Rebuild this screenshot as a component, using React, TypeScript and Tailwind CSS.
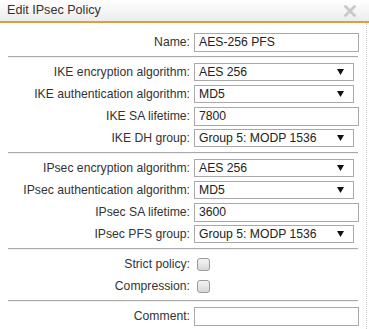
import React from "react";

const Separator: React.FC = () => (
  <div className="h-[8px] flex items-center pl-[8px] pr-[8px]">
    <div className="w-full border-t border-[#a9a9a9] border-b border-b-[#f3f3f3]" />
  </div>
);

const Label: React.FC<{ text: string }> = ({ text }) => (
  <div className="w-[194px] shrink-0 text-right pr-[4px] text-[12.2px] text-[#333]">{text}</div>
);

const TextRow: React.FC<{ label: string; value: string }> = ({ label, value }) => (
  <div className="h-[22px] flex items-center">
    <Label text={label} />
    <div className="w-[165px] h-[19px] border border-[#a9a9a9] bg-white px-[4px] flex items-center text-[12.2px] text-[#222]">
      {value}
    </div>
  </div>
);

const SelectRow: React.FC<{ label: string; value: string }> = ({ label, value }) => (
  <div className="h-[22px] flex items-center">
    <Label text={label} />
    <div className="w-[160px] h-[18px] border border-[#a9a9a9] bg-white pl-[4px] pr-[9px] flex items-center justify-between text-[12.2px] text-[#222]">
      <span>{value}</span>
      <svg width="7" height="6" viewBox="0 0 7 6">
        <path d="M0 0 L7 0 L3.5 6 Z" fill="#111" />
      </svg>
    </div>
  </div>
);

const CheckRow: React.FC<{ label: string }> = ({ label }) => (
  <div className="h-[22px] flex items-center">
    <Label text={label} />
    <div className="ml-[3px] w-[13px] h-[13px] rounded-[3px] border border-[#9a9a9a] bg-gradient-to-b from-[#f4f4f4] to-[#d8d8d8]" />
  </div>
);

const App: React.FC = () => {
  return (
    <div className="w-[369px] h-[329px] bg-white font-['Liberation_Sans',Arial,sans-serif] overflow-hidden">
      <div className="h-[21px] bg-gradient-to-b from-white to-[#ececec] flex items-center justify-between pl-[7px] pr-[13px]">
        <span className="text-[12.6px] text-[#333]">Edit IPsec Policy</span>
        <svg width="12" height="12" viewBox="0 0 12 12">
          <path d="M1.5 1.5 L10.5 10.5 M10.5 1.5 L1.5 10.5" stroke="#c9c9c9" strokeWidth="2.8" strokeLinecap="round" />
        </svg>
      </div>
      <div className="h-[2px] bg-[#e39c3a]" />
      <div className="w-[367px] h-[306px] border-r border-dotted border-[#cfcfcf] pt-[8px]">
        <TextRow label="Name:" value="AES-256 PFS" />
        <Separator />
        <SelectRow label="IKE encryption algorithm:" value="AES 256" />
        <SelectRow label="IKE authentication algorithm:" value="MD5" />
        <TextRow label="IKE SA lifetime:" value="7800" />
        <SelectRow label="IKE DH group:" value="Group 5: MODP 1536" />
        <Separator />
        <SelectRow label="IPsec encryption algorithm:" value="AES 256" />
        <SelectRow label="IPsec authentication algorithm:" value="MD5" />
        <TextRow label="IPsec SA lifetime:" value="3600" />
        <SelectRow label="IPsec PFS group:" value="Group 5: MODP 1536" />
        <Separator />
        <CheckRow label="Strict policy:" />
        <CheckRow label="Compression:" />
        <Separator />
        <TextRow label="Comment:" value="" />
      </div>
    </div>
  );
};

export default App;
